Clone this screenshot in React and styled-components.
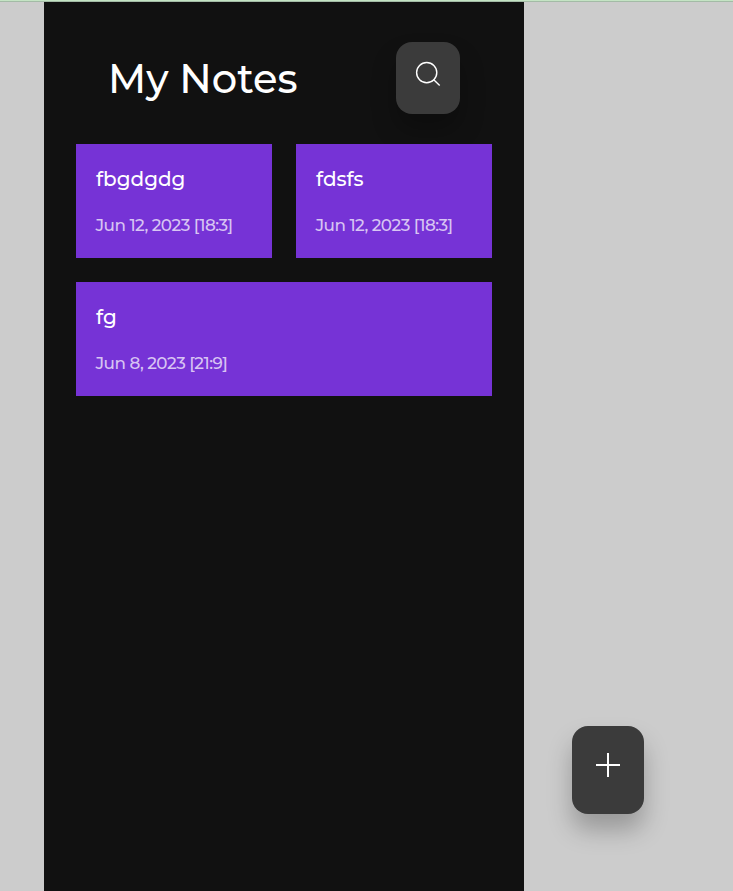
import React from "react";
import styled, { createGlobalStyle } from "styled-components";

const GlobalStyle = createGlobalStyle`
  * { box-sizing: border-box; }
  html, body { margin: 0; background: #ccc; }
  body { font-family: Montserrat, Inter, sans-serif; color: #fff; overflow: hidden; }
  h1, h2, p { margin: 0; }
`;

const Page = styled.div`
  height: 100vh;
  border-top: 1px solid #c4e4c4;
`;

const Body = styled.div`
  height: 100%;
  border-top: 1px solid #a3bba6;
  padding-left: 44px;
`;

const Phone = styled.main`
  width: 480px;
  height: 100%;
  background: #111;
  padding: 40px 32px 0;
`;

const Header = styled.header`
  display: flex;
  justify-content: space-between;
  align-items: center;
  height: 72px;
  padding: 0 32px;
  margin-bottom: 30px;
`;

const Title = styled.h1`
  padding-top: 2px;
  font-size: 40px;
  line-height: 48px;
  font-weight: 500;
  white-space: nowrap;
`;

const IconButton = styled.button`
  display: flex;
  justify-content: center;
  align-items: flex-start;
  border: 0;
  margin: 0;
  color: #fff;
  background: #3b3b3b;
  border-radius: 16px;
  box-shadow: 0 16px 24px rgba(0, 0, 0, 0.25);
`;

const SearchButton = styled(IconButton)`
  width: 64px;
  height: 72px;
  padding: 16px;
`;

const AddButton = styled(IconButton)`
  position: fixed;
  left: 572px;
  top: 726px;
  width: 72px;
  height: 88px;
  padding: 23px 20px;
`;

const Icon = styled.svg`
  display: block;
  flex: none;
  width: 32px;
  height: 32px;
  fill: none;
  stroke: currentColor;
`;

const Notes = styled.section`
  display: grid;
  grid-template-columns: 1fr 1fr;
  gap: 24px;
`;

const Card = styled.article`
  height: 114px;
  padding: 20px;
  background: #7633d6;
  grid-column: ${(p) => (p.$wide ? "1 / -1" : "auto")};
`;

const Name = styled.h2`
  font-size: 20px;
  line-height: 30px;
  font-weight: 500;
  white-space: nowrap;
`;

const DateText = styled.p`
  margin-top: 19px;
  margin-left: -0.5px;
  font-size: 16.8px;
  line-height: 24px;
  font-weight: 500;
  white-space: nowrap;
  color: rgba(255, 255, 255, 0.72);
  letter-spacing: -0.5px;
`;

const notes = [
  { name: "fbgdgdg", date: "Jun 12, 2023 [18:3]" },
  { name: "fdsfs", date: "Jun 12, 2023 [18:3]" },
  { name: "fg", date: "Jun 8, 2023 [21:9]", wide: true },
];

export default function App() {
  return (
    <>
      <GlobalStyle />
      <Page>
        <Body>
          <Phone>
            <Header>
              <Title>My Notes</Title>
              <SearchButton aria-label="Search">
                <Icon viewBox="0 0 32 32" strokeWidth="1.4">
                  <circle cx="14.7" cy="14.6" r="10.1" />
                  <path d="M21.5 21.5 L27.7 27.6" />
                </Icon>
              </SearchButton>
            </Header>
            <Notes>
              {notes.map((n) => (
                <Card key={n.name} $wide={n.wide}>
                  <Name>{n.name}</Name>
                  <DateText>{n.date}</DateText>
                </Card>
              ))}
            </Notes>
          </Phone>
        </Body>
      </Page>
      <AddButton aria-label="Add note">
        <Icon viewBox="0 0 32 32" strokeWidth="2">
          <path d="M4 16H28M16 4V28" />
        </Icon>
      </AddButton>
    </>
  );
}
